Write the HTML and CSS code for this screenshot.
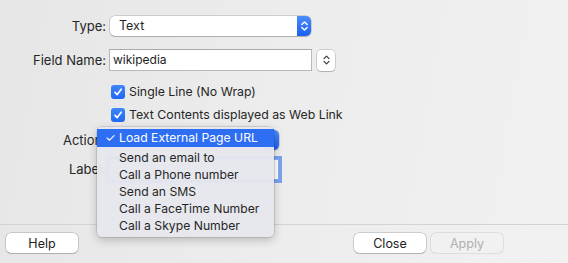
FILE: index.html
```html
<!DOCTYPE html>
<html lang="en">
<head>
  <meta charset="UTF-8">
  <title>Field Settings</title>
  <link rel="stylesheet" href="styles.css">
</head>
<body>
  <div class="window">
    <div class="form">
      <label class="label">Type:</label>
      <div class="field">
        <div class="popup popup-type">
          <span class="popup-text">Text</span>
          <span class="popup-arrows">
            <svg width="9" height="12" viewBox="0 0 9 12"><path d="M1.8 4.6 L4.5 1.9 L7.2 4.6 M1.8 7.4 L4.5 10.1 L7.2 7.4" fill="none" stroke="#fff" stroke-width="1.4" stroke-linecap="round" stroke-linejoin="round"/></svg>
          </span>
        </div>
      </div>

      <label class="label row-field">Field Name:</label>
      <div class="field row-field">
        <div class="textfield textfield-name">wikipedia</div>
        <div class="stepper">
          <svg width="9" height="12" viewBox="0 0 9 12"><path d="M2 4.6 L4.5 2.1 L7 4.6 M2 7.4 L4.5 9.9 L7 7.4" fill="none" stroke="#3a3a3a" stroke-width="1.2" stroke-linecap="round" stroke-linejoin="round"/></svg>
        </div>
      </div>

      <span class="row-check1"></span>
      <div class="field row-check1">
        <span class="checkbox"><svg width="10" height="10" viewBox="0 0 10 10"><path d="M2 5.3 L4.2 7.6 L8.2 2.2" fill="none" stroke="#fff" stroke-width="1.7" stroke-linecap="round" stroke-linejoin="round"/></svg></span>
        <span class="check-text">Single Line (No Wrap)</span>
      </div>

      <span class="row-check2"></span>
      <div class="field row-check2">
        <span class="checkbox"><svg width="10" height="10" viewBox="0 0 10 10"><path d="M2 5.3 L4.2 7.6 L8.2 2.2" fill="none" stroke="#fff" stroke-width="1.7" stroke-linecap="round" stroke-linejoin="round"/></svg></span>
        <span class="check-text">Text Contents displayed as Web Link</span>
      </div>

      <label class="label row-action">Action:</label>
      <div class="field row-action">
        <div class="popup popup-action">
          <span class="popup-text"></span>
          <span class="popup-arrows"></span>
        </div>
      </div>

      <label class="label row-label">Label:</label>
      <div class="field row-label">
        <div class="textfield textfield-label focused"></div>
      </div>
    </div>

    <div class="footer">
      <button class="btn">Help</button>
      <div class="footer-right">
        <button class="btn">Close</button>
        <button class="btn btn-disabled">Apply</button>
      </div>
    </div>

    <!-- open popup menu of the Action field -->
    <ul class="menu">
      <li class="menu-item selected"><span class="tick">✓</span>Load External Page URL</li>
      <li class="menu-item">Send an email to</li>
      <li class="menu-item">Call a Phone number</li>
      <li class="menu-item">Send an SMS</li>
      <li class="menu-item">Call a FaceTime Number</li>
      <li class="menu-item">Call a Skype Number</li>
    </ul>
  </div>
</body>
</html>
```

FILE: styles.css
```css
/* Base */
body, html {
  margin: 0;
  padding: 0;
  width: 568px;
  height: 263px;
  overflow: hidden;
}

body {
  font-family: Inter, "Liberation Sans", Arial, sans-serif;
  font-size: 12px;
  color: #262626;
}

/* Window */
.window {
  position: relative;
  width: 568px;
  height: 263px;
  background: linear-gradient(100deg, #e6e6e6 0%, #ececec 45%, #f1f1f1 100%);
}

/* Form */
.form {
  display: grid;
  grid-template-columns: 106px 1fr;
  align-content: start;
  column-gap: 4px;
  padding-top: 16px;
  height: 224px;
  box-sizing: border-box;
}

.label {
  text-align: right;
  font-size: 13px;
  line-height: 20px;
  height: 20px;
}

.field {
  display: flex;
  align-items: center;
  height: 20px;
}

.row-field { margin-top: 13px; height: 22px; line-height: 22px; }
.row-check1 { margin-top: 14px; height: 14px; }
.row-check2 { margin-top: 9px; height: 14px; }
.row-action { margin-top: 8px; }
.row-label { margin-top: 9px; height: 21px; line-height: 21px; }

/* Popup button */
.popup {
  display: flex;
  align-items: stretch;
  height: 20px;
  box-sizing: border-box;
  background: #fff;
  border-radius: 5px;
  box-shadow: 0 0 0 0.5px rgba(0, 0, 0, 0.25), 0 1px 1px rgba(0, 0, 0, 0.15);
  overflow: hidden;
}

.popup-type { width: 201px; }
.popup-action { width: 169px; }

.popup-text {
  flex: 1;
  padding-left: 9px;
  line-height: 20px;
  font-size: 12.5px;
}

.popup-arrows {
  width: 14px;
  display: flex;
  align-items: center;
  justify-content: center;
  background: linear-gradient(#4d8cfb, #1a5ff3);
}

/* Text field */
.textfield {
  height: 22px;
  box-sizing: border-box;
  background: #fff;
  border: 1px solid #b8b8b8;
  border-top-color: #a9a9a9;
  padding-left: 3px;
  line-height: 20px;
  color: #1e1e1e;
}

.textfield-name { width: 203px; margin-left: -1px; }

.textfield-label {
  width: 170px;
  height: 21px;
  margin-left: -1px;
}

.focused {
  border-color: #8aaef0;
  box-shadow: 0 0 0 3px rgba(59, 125, 240, 0.65);
}

.stepper {
  width: 18px;
  height: 21px;
  margin-left: 5px;
  box-sizing: border-box;
  background: #fff;
  border-radius: 4px;
  box-shadow: 0 0 0 0.5px rgba(0, 0, 0, 0.25), 0 1px 1px rgba(0, 0, 0, 0.15);
  display: flex;
  align-items: center;
  justify-content: center;
}

/* Checkbox */
.checkbox {
  width: 14px;
  height: 14px;
  margin-left: 1px;
  border-radius: 3px;
  background: linear-gradient(#3f86f8, #2068f1);
  display: flex;
  align-items: center;
  justify-content: center;
}

.check-text {
  margin-left: 4px;
  line-height: 14px;
  font-size: 12.3px;
}

/* Footer */
.footer {
  border-top: 1px solid #d3d3d3;
  display: flex;
  justify-content: space-between;
  padding: 8px 65px 0 6px;
}

.footer-right {
  display: flex;
  gap: 5px;
}

.btn {
  width: 72px;
  height: 20px;
  padding: 0;
  font-family: inherit;
  font-size: 12.5px;
  color: #222;
  background: #fff;
  border: none;
  border-radius: 5px;
  box-shadow: 0 0 0 0.5px rgba(0, 0, 0, 0.28), 0 1px 1px rgba(0, 0, 0, 0.12);
}

.btn-disabled {
  background: #f1f1f1;
  color: #b0b0b0;
  box-shadow: 0 0 0 0.5px rgba(0, 0, 0, 0.15);
}

/* Popup menu */
.menu {
  position: absolute;
  left: 97px;
  top: 127px;
  width: 177px;
  margin: 0;
  padding: 2px 0 3px;
  list-style: none;
  background: rgba(229, 231, 236, 0.97);
  border-radius: 5px;
  box-shadow: 0 0 0 0.5px rgba(0, 0, 0, 0.2), 0 3px 10px rgba(0, 0, 0, 0.22);
  box-sizing: border-box;
}

.menu-item {
  position: relative;
  height: 17px;
  line-height: 17px;
  padding-left: 22px;
  color: #262626;
  font-size: 12.2px;
}

.menu-item.selected {
  height: 18px;
  line-height: 18px;
  background: #2d6ef3;
  color: #fff;
  margin-bottom: 2px;
}

.tick {
  position: absolute;
  left: 8px;
}
```
